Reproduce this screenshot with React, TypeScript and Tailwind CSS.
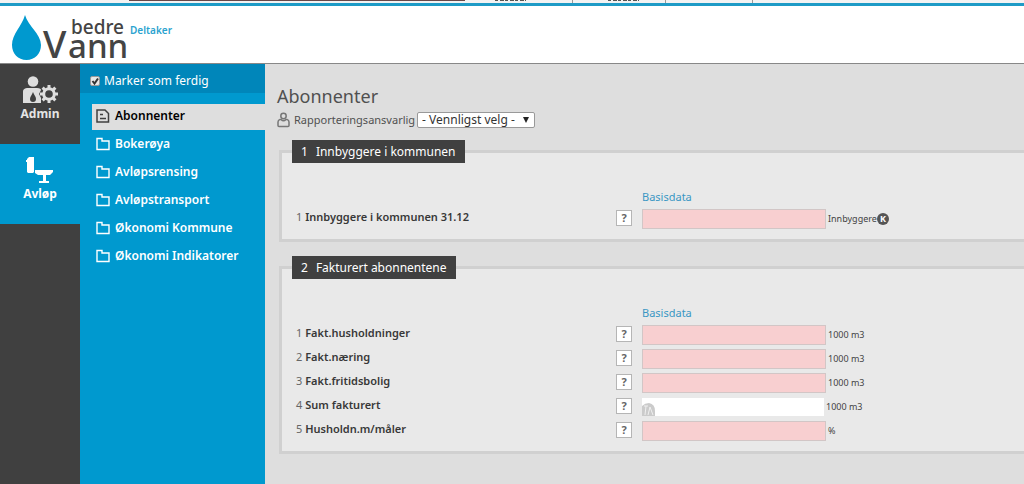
import { ReactNode, useState } from "react";
import clsx from "clsx";

interface Field {
  label: string;
  unit: string;
  calculated?: boolean;
  badge?: string;
}

const menuItems = ["Abonnenter", "Bokerøya", "Avløpsrensing", "Avløpstransport", "Økonomi Kommune", "Økonomi Indikatorer"];

const populationFields: Field[] = [{ label: "Innbyggere i kommunen 31.12", unit: "Innbyggere", badge: "K" }];

const invoicedFields: Field[] = [
  { label: "Fakt.husholdninger", unit: "1000 m3" },
  { label: "Fakt.næring", unit: "1000 m3" },
  { label: "Fakt.fritidsbolig", unit: "1000 m3" },
  { label: "Sum fakturert", unit: "1000 m3", calculated: true },
  { label: "Husholdn.m/måler", unit: "%" },
];

function Logo() {
  return (
    <svg width="180" height="72" viewBox="0 0 180 72" className="block" fontFamily="'Noto Sans', sans-serif" role="img" aria-label="bedre Vann Deltaker">
      <path d="M25 9C22 20 12 28 12 39C12 47.500 18 54 26.500 54C35 54 41 47.500 41 39C41 28 28 20 25 9Z" fill="#0099cf" />
      <text x="71" y="28" fontSize="19" fontWeight="500" fill="#444">bedre</text>
      <text x="43" y="52" fontSize="38" fontWeight="500" fill="#444">V</text>
      <text x="68" y="52" fontSize="33" fontWeight="500" fill="#444">ann</text>
      <text x="130" y="28" fontSize="10" fontWeight="600" fill="#2ba3cf">Deltaker</text>
    </svg>
  );
}

function AdminIcon() {
  return (
    <svg width="36" height="28" viewBox="0 0 36 28" fill="#dedede">
      <circle cx="11" cy="5.500" r="5.300" />
      <path d="M1 27V16C1 13 3 12 6 12H15C18 12 19 13 19 14L17 18L19 22V27Z" />
      <path d="M11 16C10 19 8 20.500 8 23A3 3 0 0 0 14 23C14 20.500 12 19 11 16Z" fill="#404040" />
      <circle cx="27" cy="18" r="5.300" fill="none" stroke="#dedede" strokeWidth="3" />
      <path d="M27 9V13M27 23V27M18 18H22M32 18H36M20.600 11.600L23.400 14.400M30.600 21.600L33.400 24.400M33.400 11.600L30.600 14.400M23.400 21.600L20.600 24.400" stroke="#dedede" strokeWidth="3" />
    </svg>
  );
}

function ToiletIcon() {
  return (
    <svg width="28" height="28" viewBox="0 0 28 28" fill="#fff">
      <path d="M3 1H8V16L7 17H2L1 16V6H0V4H1V3Z" />
      <path d="M9 14H27V16L24 19H20V25H23V27H13V25H17V19H12L9 17Z" />
    </svg>
  );
}

function DocumentIcon() {
  return (
    <svg width="14" height="14" viewBox="0 0 14 14" fill="none" stroke="#404040" strokeWidth="1.500">
      <path d="M1 1H9L12.500 4.500V13H1ZM4 5.500H7M4 9.500H10" />
    </svg>
  );
}

function FolderIcon() {
  return (
    <svg width="14" height="14" viewBox="0 0 14 14" fill="none" stroke="#fff" strokeWidth="1.400">
      <path d="M1 1.500H6V4H13V12.500H1Z" />
    </svg>
  );
}

function PersonIcon() {
  return (
    <svg width="13" height="16" viewBox="0 0 13 16" fill="none" stroke="#777" strokeWidth="1.500">
      <circle cx="6.500" cy="4" r="2.700" />
      <path d="M4 7.500H3Q1 8 1 10V13.500Q1 14.500 2 14.500H11Q12 14.500 12 13.500V10Q12 8 10 7.500H9Q6.500 10 4 7.500Z" />
    </svg>
  );
}

function GaugeIcon() {
  return (
    <svg width="14" height="14" viewBox="0 0 14 14" className="absolute bottom-0 left-0">
      <path d="M0 14V4Q3 1 7 1Q13 2 13 9V14Z" fill="#cbcbcb" />
      <path d="M2 4H6M4 4L3 13M8 5L6 13M8 5L11 13" fill="none" stroke="#f0f0f0" />
    </svg>
  );
}

function BrowserStrip() {
  return (
    <div className="h-[6px] border-b-[3px] border-[#1e9bc6] bg-[#f3f3f3]">
      <svg width="760" height="3" className="block">
        <path d="M129 0.500H465" stroke="#684848" />
        <path d="M495 0.500H526M608 0.500H639" stroke="#555" strokeDasharray="3 2 4 1" />
        <path d="M572.500 0V3M665.500 0V3M752.500 0V3" stroke="#999" />
      </svg>
    </div>
  );
}

interface NavTileProps {
  label: string;
  active?: boolean;
  children: ReactNode;
}

function NavTile({ label, active, children }: NavTileProps) {
  return (
    <a
      href="#"
      className={clsx("flex h-20 flex-col items-center gap-0.5 pt-3 text-xs leading-4 font-bold", active ? "bg-[#0099cf] text-white" : "bg-[#404040] text-[#e4e4e4]")}
    >
      {children}
      {label}
    </a>
  );
}

interface SectionProps {
  id: string;
  number: number;
  title: string;
  fields: Field[];
}

function Section({ id, number, title, fields }: SectionProps) {
  return (
    <fieldset className="border-[3px] border-r-0 border-[#d0d0d0] bg-[#e9e9e9] pb-2 pl-3.5">
      <legend className="-ml-1 bg-[#404040] px-[9px] text-xs leading-[23px] text-white">
        <span className="mr-2">{number}</span>
        {title}
      </legend>
      <table className="mt-6 w-full table-fixed text-left">
        <colgroup>
          <col className="w-[320px]" />
          <col className="w-[26px]" />
          <col />
        </colgroup>
        <thead>
          <tr className="h-5 text-[11px] leading-5 text-[#3a97c4]">
            <td />
            <td />
            <th className="font-normal">Basisdata</th>
          </tr>
        </thead>
        <tbody>
          {fields.map((field, index) => (
            <tr key={field.label} className="h-6">
              <td className="pb-1 text-[11px] leading-5 text-[#666]">
                {index + 1}{" "}
                <label htmlFor={`${id}-${index}`} className="font-semibold text-[#383838]">
                  {field.label}
                </label>
              </td>
              <td className="pb-0.5">
                <button type="button" className="block size-4 border border-[#b5b5b5] bg-white text-center text-[11px] leading-[14px] font-bold text-[#666]">
                  ?
                </button>
              </td>
              <td>
                <div className="flex items-center text-[9px] leading-5 text-[#444]">
                  <div className="relative mr-0.5">
                    <input
                      id={`${id}-${index}`}
                      readOnly={field.calculated}
                      className={clsx("block px-1", field.calculated ? "h-[18px] w-[182px] bg-white" : "h-5 w-[184px] border border-[#d2c6c6] bg-[#f8cfd0]")}
                    />
                    {field.calculated && <GaugeIcon />}
                  </div>
                  {field.unit}
                  {field.badge && (
                    <span className="flex size-3 items-center justify-center rounded-full bg-[#555] text-[9px] leading-3 font-bold text-white">{field.badge}</span>
                  )}
                </div>
              </td>
            </tr>
          ))}
        </tbody>
      </table>
    </fieldset>
  );
}

export default function App() {
  const [done, setDone] = useState(true);

  return (
    <div className="flex min-h-screen flex-col bg-white font-['Noto_Sans',sans-serif]">
      <BrowserStrip />
      <header className="h-[58px] border-b border-[#888]">
        <Logo />
      </header>
      <div className="flex flex-1">
        <nav className="w-20 shrink-0 bg-[#404040]">
          <NavTile label="Admin">
            <AdminIcon />
          </NavTile>
          <NavTile label="Avløp" active>
            <ToiletIcon />
          </NavTile>
        </nav>

        <aside className="w-[185px] shrink-0 bg-[#0099cf]">
          <label className="flex h-[29px] items-center gap-1 bg-[#0086ba] pt-1 pl-2.5 text-xs text-white">
            <span className="relative size-[10px]">
              <input
                type="checkbox"
                checked={done}
                onChange={(e) => setDone(e.target.checked)}
                className="block size-[10px] appearance-none rounded-xs border border-[#999] bg-[#e8e8e8]"
              />
              {done && (
                <svg viewBox="0 0 10 10" className="pointer-events-none absolute inset-0" fill="none" stroke="#333" strokeWidth="2">
                  <path d="M2.500 5L4.500 7.500L8 2.500" />
                </svg>
              )}
            </span>
            Marker som ferdig
          </label>
          <ul className="mt-[11px] flex flex-col gap-0.5 pl-3 text-xs font-semibold text-white">
            {menuItems.map((item, index) => (
              <li key={item}>
                <a href="#" className={clsx("flex h-[26px] items-center gap-[5px] pb-0.5 pl-1", index === 0 && "bg-[#dedede] text-black")}>
                  {index === 0 ? <DocumentIcon /> : <FolderIcon />}
                  {item}
                </a>
              </li>
            ))}
          </ul>
        </aside>

        <main className="min-w-0 flex-1 bg-[#dedede] pt-5 pl-3">
          <h1 className="text-lg leading-6 text-[#505050]">Abonnenter</h1>
          <div className="mt-0.5 flex h-5 items-center text-[11px] text-[#505050]">
            <PersonIcon />
            <label htmlFor="responsible" className="mr-0.5 ml-1">
              Rapporteringsansvarlig
            </label>
            <div className="relative">
              <select id="responsible" className="block h-4 w-[118px] appearance-none rounded-xs border border-[#999] bg-white pl-1 text-xs leading-[14px] text-[#333]">
                <option>- Vennligst velg -</option>
              </select>
              <svg width="6" height="6" className="pointer-events-none absolute top-[5px] right-[6px]">
                <path d="M0 0H6L3 6Z" fill="#222" />
              </svg>
            </div>
          </div>
          <form className="mt-2.5 ml-0.5 flex flex-col gap-3.5">
            <Section id="population" number={1} title="Innbyggere i kommunen" fields={populationFields} />
            <Section id="invoiced" number={2} title="Fakturert abonnentene" fields={invoicedFields} />
          </form>
        </main>
      </div>
    </div>
  );
}
